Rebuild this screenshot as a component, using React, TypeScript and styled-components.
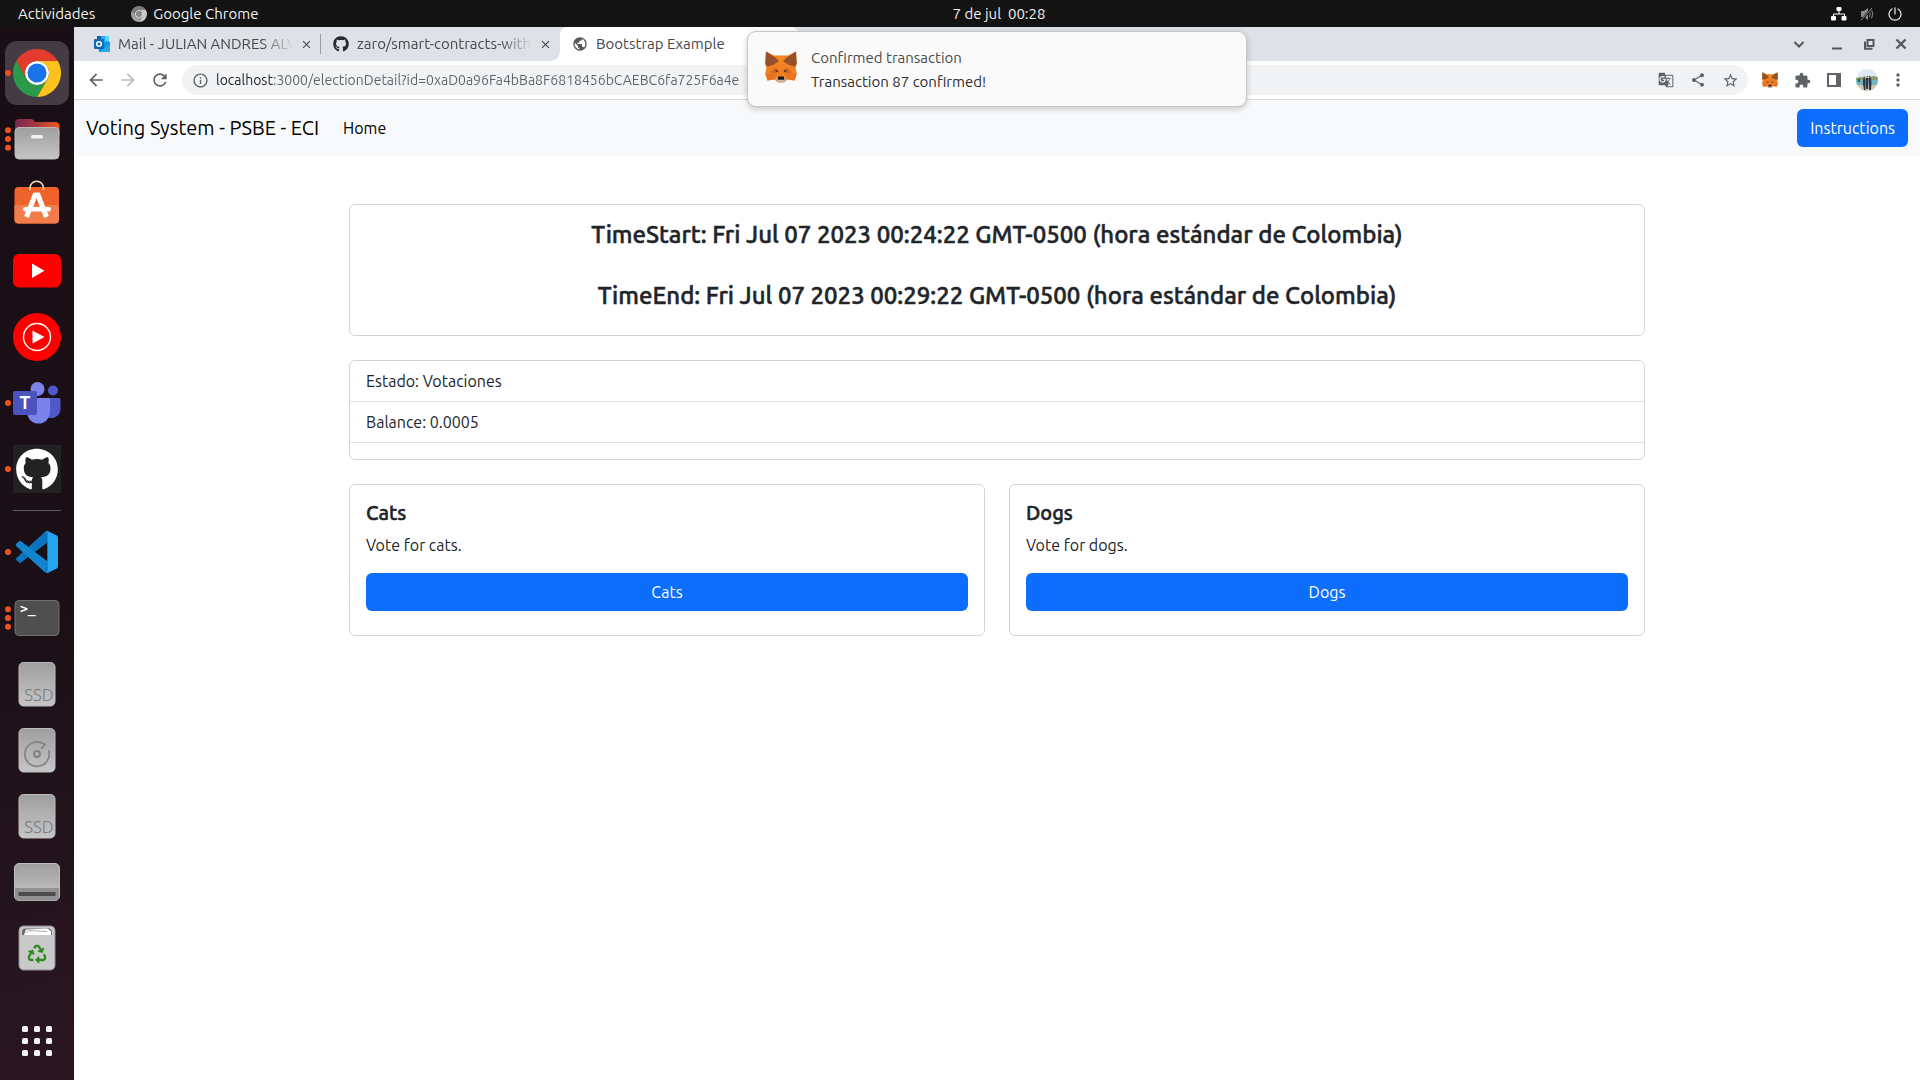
import React from "react";
import styled, { createGlobalStyle, css } from "styled-components";
import { FaGithub, FaRecycle } from "react-icons/fa";
import {
  MdArrowBack,
  MdArrowForward,
  MdClose,
  MdExtension,
  MdGTranslate,
  MdInfoOutline,
  MdMoreVert,
  MdPublic,
  MdRefresh,
  MdShare,
  MdStarBorder,
} from "react-icons/md";

const GlobalStyle = createGlobalStyle`
  *, *::before, *::after { box-sizing: border-box; }
  body { margin: 0; }
  body, button, input {
    font-family: Ubuntu, "Noto Sans", "Open Sans", sans-serif;
  }
  button { border: 0; background: none; padding: 0; margin: 0; color: inherit; cursor: pointer; }
  h1, h2, p, ul { margin: 0; padding: 0; }
  svg { display: block; flex: none; }
`;

/* ---------- desktop shell ---------- */

const Desktop = styled.div`
  min-height: 100vh;
  display: grid;
  grid-template: 27px 1fr / 74px 1fr;
  background: #fff;
`;

const TopBar = styled.header`
  grid-column: 1 / -1;
  display: grid;
  grid-template-columns: 1fr auto 1fr;
  align-items: center;
  padding: 0 18px;
  background: #131313;
  color: #f2f2f2;
  font-size: 15px;
  line-height: 26px;
`;

const TopGroup = styled.div<{ $end?: boolean; $gap: number }>`
  display: flex;
  align-items: center;
  justify-content: ${(p) => (p.$end ? "flex-end" : "flex-start")};
  gap: ${(p) => p.$gap}px;
`;

const TopButton = styled.button`
  display: flex;
  align-items: center;
  gap: 6px;
  font-size: 15px;
  line-height: 26px;
  white-space: pre;
`;

/* The clock is centred over the work area, to the right of the dock. */
const Clock = styled(TopButton)`
  padding-left: 78px;
`;

const Dock = styled.nav`
  display: flex;
  flex-direction: column;
  gap: 2px;
  padding: 14px 5px 7px;
  background: linear-gradient(165deg, #190e14 0%, #1b1017 55%, #2a1621 100%);
`;

const DockItem = styled.button<{ $active?: boolean; $last?: boolean }>`
  height: 64px;
  border-radius: 12px;
  ${(p) => p.$active && css`background: #453c43;`}
  ${(p) => p.$last && css`margin-top: auto;`}
`;

const DockRule = styled.hr`
  width: 48px;
  height: 1px;
  margin: 7px auto;
  border: 0;
  background: #5d555b;
`;

/* ---------- browser window ---------- */

const Browser = styled.div`
  position: relative;
  min-width: 0;
  display: flex;
  flex-direction: column;
`;

const TabStrip = styled.div`
  display: flex;
  align-items: center;
  height: 34px;
  padding-left: 8px;
  background: #dee1e6;
  color: #45494d;
`;

const Tab = styled.div<{ $active?: boolean; $divided?: boolean; $beforeActive?: boolean }>`
  width: 239px;
  height: 34px;
  display: flex;
  align-items: center;
  padding: 0 3px 0 12px;
  ${(p) =>
    p.$active &&
    css`
      background: #fff;
      border-radius: 8px 8px 0 0;
    `}
  ${(p) =>
    p.$beforeActive &&
    css`
      background: radial-gradient(circle at 0 0, transparent 7px, #fff 8px) right bottom / 8px 8px no-repeat;
    `}
  ${(p) =>
    p.$divided &&
    css`
      background: linear-gradient(#9a9da1, #9a9da1) right center / 1px 20px no-repeat;
    `}
`;

const TabLabel = styled.button<{ $fade?: boolean }>`
  flex: 1;
  min-width: 0;
  display: flex;
  align-items: center;
  gap: 8px;
  font-size: 15px;
  line-height: 20px;
  text-align: left;
  white-space: nowrap;
  overflow: hidden;
  ${(p) =>
    p.$fade &&
    css`
      mask-image: linear-gradient(90deg, #000 calc(100% - 32px), transparent);
    `}
`;

const CloseTab = styled.button`
  width: 24px;
  display: flex;
  justify-content: center;
`;

const WindowControls = styled.div`
  margin-left: auto;
  padding-right: 9px;
  display: flex;
  gap: 12px;
  button {
    width: 20px;
    height: 20px;
  }
  button:first-child {
    margin-right: 6px;
  }
`;

const Toolbar = styled.div`
  display: flex;
  align-items: center;
  height: 39px;
  padding: 0 12px;
  gap: 12px;
  background: #fff;
  border-bottom: 1px solid #d9dadc;
  color: #5f6368;
`;

const ToolButton = styled.button<{ $muted?: boolean }>`
  flex: none;
  width: 20px;
  height: 24px;
  display: grid;
  place-items: center;
  color: ${(p) => (p.$muted ? "#babcbe" : "#5f6368")};
`;

const Omnibox = styled.div`
  flex: 1;
  display: flex;
  align-items: center;
  gap: 12px;
  height: 30px;
  padding: 0 8px;
  border-radius: 15px;
  background: #f1f3f4;
`;

const Address = styled.input`
  flex: 1;
  min-width: 0;
  margin-left: -6px;
  padding: 0;
  border: 0;
  outline: 0;
  font-size: 14px;
  line-height: 20px;
  background: linear-gradient(90deg, #202124 58px, #5f6368 58px);
  background-clip: text;
  -webkit-text-fill-color: transparent;
`;

/* ---------- notification ---------- */

const Toast = styled.section`
  position: absolute;
  z-index: 2;
  top: 4px;
  left: 50%;
  transform: translateX(-50%);
  width: 500px;
  display: flex;
  gap: 14px;
  padding: 15px 18px 13px 17px;
  border: 1px solid #c6c6c6;
  border-radius: 9px;
  background: #fafafa;
  box-shadow: 0 2px 6px rgba(0, 0, 0, 0.2);
  color: #2e2e2e;
  font-size: 15px;
  line-height: 22px;
`;

const ToastIcon = styled.div`
  padding-top: 4px;
`;

const ToastText = styled.div`
  display: flex;
  flex-direction: column;
  gap: 2px;
`;

const ToastTitle = styled.p`
  color: #4a4a4a;
`;

/* ---------- web page ---------- */

const NavBar = styled.nav`
  display: flex;
  align-items: center;
  gap: 24px;
  min-height: 56px;
  padding: 8px 12px;
  background: #f8f9fa;
`;

const Brand = styled.a`
  color: #000;
  font-size: 20px;
  line-height: 30px;
  text-decoration: none;
`;

const NavLink = styled.a`
  color: #000;
  font-size: 16px;
  line-height: 24px;
  text-decoration: none;
`;

const PrimaryButton = styled.button<{ $block?: boolean }>`
  height: 38px;
  padding: 0 13px;
  border-radius: 6px;
  background: #0d6efd;
  color: #fff;
  font-size: 16px;
  line-height: 24px;
  ${(p) => (p.$block ? css`width: 100%; margin-bottom: 8px;` : css`margin-left: auto;`)}
`;

const Container = styled.main`
  width: 100%;
  max-width: 1320px;
  margin: 0 auto;
  padding: 48px 12px;
  display: flex;
  flex-direction: column;
  gap: 24px;
  color: #212529;
  font-size: 16px;
  line-height: 24px;
`;

const Card = styled.section`
  border: 1px solid #d3d3d4;
  border-radius: 6px;
  background: #fff;
`;

const CardBody = styled.div`
  padding: 16px;
`;

const Times = styled.div`
  display: flex;
  flex-direction: column;
  gap: 33px;
  padding: 16px 16px 25px;
  text-align: center;
`;

const TimeHeading = styled.h1`
  font-size: 24px;
  line-height: 28px;
  font-weight: 500;
  -webkit-text-stroke: 0.5px currentColor;
`;

const List = styled.ul`
  list-style: none;
  padding-bottom: 16px;
`;

const ListItem = styled.li`
  padding: 8px 16px;
  border-bottom: 1px solid #dee0e2;
`;

const Choices = styled.div`
  display: grid;
  grid-template-columns: 1fr 1fr;
  gap: 24px;
`;

const ChoiceTitle = styled.h2`
  margin-bottom: 8px;
  font-size: 20px;
  line-height: 24px;
  font-weight: 500;
  -webkit-text-stroke: 0.5px currentColor;
`;

const ChoiceText = styled.p`
  margin-bottom: 16px;
`;

/* ---------- drawings ---------- */

const ChromeLogo = ({ size, gray }: { size: number; gray?: boolean }) => {
  const c = gray
    ? ["#7d7d7d", "#c9c9c9", "#a0a0a0", "#8a8a8a"]
    : ["#e33b2e", "#fcc31e", "#2a9b48", "#1a73e8"];
  return (
    <svg width={size} height={size} viewBox="0 0 48 48">
      <circle cx="24" cy="24" r="12" fill="#fff" />
      <path d="M24 12H44.78a24 24 0 0 0-41.56 0L13.6 30A12 12 0 0 1 24 12Z" fill={c[0]} />
      <path d="M34.39 30 24 48A24 24 0 0 0 44.78 12H24A12 12 0 0 1 34.39 30Z" fill={c[1]} />
      <path d="M13.6 30 3.22 12A24 24 0 0 0 24 48L34.39 30A12 12 0 0 1 13.6 30Z" fill={c[2]} />
      <circle cx="24" cy="24" r="9.5" fill={c[3]} />
    </svg>
  );
};

const Fox = ({ size }: { size: number }) => (
  <svg width={size} height={size} viewBox="0 0 32 32">
    <path d="M1 .5 9 4.500h14L31 .5l.8 13-1.300 3 1.300 6-2.300 7-7-1-3.500 3h-6l-3.500-3-7 1L.2 22.500l1.300-6-1.300-3Z" fill="#f08020" />
    <path d="M12.500 5h7l-1 8h-5Z" fill="#f8881e" />
    <path d="M1 .5 9.500 6 14 10 8 14 2 15.500.3 12.500Z M31 .5 22.500 6 18 10 24 14 30 15.500 31.700 12.500Z" fill="#96512a" />
    <path d="M.2 23 10.500 22 10 28 2.500 29.500Z M31.800 23 21.500 22 22 28 29.500 29.500Z" fill="#e87424" />
    <path d="M10.500 22.500 5 21.500 9 17 13.500 18 13.500 22Z M21.500 22.500 27 21.500 23 17 18.500 18 18.500 22Z" fill="#d96c22" />
    <path d="M10.200 18.800 13 19.500 13.200 21 10.800 20.800Z M21.800 18.800 19 19.500 18.800 21 21.200 20.800Z" fill="#4a3a38" />
    <path d="M11 27.500 13 26h6l2 1.500-1.500 4h-7Z" fill="#c9b6a6" />
    <path d="M13.300 25.500h5.400l.8 2.500-.8.800h-5.400l-.8-.8Z" fill="#1b1a1a" />
  </svg>
);

const OutlookLogo = () => (
  <svg width="16" height="16" viewBox="0 0 16 16">
    <path d="M3 0h12v8H3Z" fill="#28a8ea" />
    <path d="M3 0h4v5H3Z" fill="#0364b8" />
    <path d="M11 0h4v5h-4Z" fill="#50d9ff" />
    <path d="M4 8 16 6v10H5Z" fill="#1490df" />
    <path d="M5 16 16 8v8Z" fill="#28a8ea" />
    <rect y="3" width="10" height="10" rx="1" fill="#0f6cbd" />
    <circle cx="5" cy="8" r="2.300" fill="none" stroke="#fff" strokeWidth="1.500" />
  </svg>
);

const Avatar = () => (
  <svg width="22" height="22" viewBox="0 0 22 22">
    <defs>
      <clipPath id="avatar-clip">
        <circle cx="11" cy="11" r="11" />
      </clipPath>
    </defs>
    <g clipPath="url(#avatar-clip)">
      <rect width="22" height="22" fill="#dfe9f1" />
      <path d="M0 9 5 8l6 1 6-2 5 1v4H0Z" fill="#85a06b" />
      <rect y="11" width="22" height="5" fill="#6fb7bd" />
      <rect y="16" width="22" height="6" fill="#d3c7b0" />
      <path d="M2 10h2v3H2Z" fill="#3f4a50" />
      <path d="M7 9.500h2.500V21H8l-1-6Z M10 9h2v11h-2Z M12.500 9h2.500l.5 5-.5 7h-2Z" fill="#34364a" />
      <path d="M7.500 7.500h1.500v1.500h-1.500Z M10.500 7h1.300v1.500h-1.300Z M13 7h1.500v1.500H13Z" fill="#5b4238" />
    </g>
  </svg>
);

const Dots = ({ count }: { count: number }) => (
  <g fill="#e95420">
    {Array.from({ length: count }, (_, i) => (
      <circle key={i} cx="3" cy={32 + (i - (count - 1) / 2) * 8.7} r="3" />
    ))}
  </g>
);

const DockArt = ({ dots = 0, children }: { dots?: number; children: React.ReactNode }) => (
  <svg width="64" height="64" viewBox="0 0 64 64">
    <defs>
      <linearGradient id="metal" x1="0" y1="0" x2="0" y2="1">
        <stop offset="0" stopColor="#9e9e9e" />
        <stop offset="1" stopColor="#c6c6c6" />
      </linearGradient>
      <linearGradient id="folder" x1="0" y1="0" x2="1" y2="0">
        <stop offset="0" stopColor="#77274f" />
        <stop offset="0.45" stopColor="#a5363f" />
        <stop offset="1" stopColor="#ed5b20" />
      </linearGradient>
    </defs>
    <Dots count={dots} />
    {children}
  </svg>
);

const FilesArt = () => (
  <DockArt dots={3}>
    <path d="M10 16a4 4 0 0 1 4-4h12q2 0 3 1.500l1 1.500h20a4 4 0 0 1 4.500 4v10h-44.500Z" fill="url(#folder)" />
    <rect x="10" y="20.500" width="44" height="31.500" rx="4" fill="url(#metal)" stroke="#b9b9b9" />
    <rect x="26" y="28" width="12" height="3.500" rx="1.500" fill="#f2f2f2" />
  </DockArt>
);

const SoftwareArt = () => (
  <DockArt>
    <rect x="9.500" y="14" width="44.500" height="36.500" rx="4" fill="#f0622b" />
    <path d="M9.500 32h44.500v14.500a4 4 0 0 1-4 4h-36.500a4 4 0 0 1-4-4Z" fill="#f37d4a" />
    <path d="M25 17v-2a6.700 6.700 0 0 1 13.500 0v2" fill="none" stroke="#f7dfb0" strokeWidth="1.600" />
    <path d="M21.500 44 30 22h3L41.500 44" fill="none" stroke="#fff" strokeWidth="5" />
    <rect x="18" y="34" width="28" height="4.500" rx="2.200" fill="#fff" />
  </DockArt>
);

const YouTubeArt = () => (
  <DockArt>
    <rect x="8" y="15" width="48" height="33.500" rx="6" fill="#f00" />
    <path d="M27 24.500v14.500L39.500 31.700Z" fill="#fff" />
  </DockArt>
);

const MusicArt = () => (
  <DockArt>
    <circle cx="32" cy="32" r="24" fill="#f00" />
    <circle cx="32" cy="32" r="13.500" fill="none" stroke="#fff" strokeWidth="1.400" />
    <path d="M27.500 25.500v13L39.500 32Z" fill="#fff" />
  </DockArt>
);

const TeamsArt = () => (
  <DockArt dots={1}>
    <circle cx="48" cy="19.500" r="5" fill="#5059c9" />
    <circle cx="32.500" cy="18" r="7" fill="#7b83eb" />
    <path d="M38 27h16a1.500 1.500 0 0 1 1.500 1.500V38a9 9 0 0 1-17.500 3Z" fill="#5059c9" />
    <path d="M22 27h21.500a1.500 1.500 0 0 1 1.500 1.500V41a11.500 11.500 0 0 1-23 0Z" fill="#7b83eb" />
    <rect x="8" y="20" width="24" height="24" rx="2" fill="#4b53bc" />
    <text x="20" y="38" textAnchor="middle" fontSize="18" fontWeight="700" fill="#fff" fontFamily="Ubuntu, Noto Sans, sans-serif">T</text>
  </DockArt>
);

const GitHubArt = () => (
  <DockArt dots={1}>
    <rect x="8" y="8" width="48" height="48" fill="#222" />
    <FaGithub x="10.500" y="11" size={43} color="#fff" />
  </DockArt>
);

const CodeArt = () => (
  <DockArt dots={1}>
    <g transform="translate(11 11) scale(1.75)">
      <path
        d="M23.15 2.587L18.21.21a1.494 1.494 0 0 0-1.705.29l-9.46 8.63-4.12-3.128a.999.999 0 0 0-1.276.057L.327 7.261A1 1 0 0 0 .326 8.74L3.899 12 .326 15.26a1 1 0 0 0 .001 1.479L1.65 17.94a.999.999 0 0 0 1.276.057l4.12-3.128 9.46 8.63a1.492 1.492 0 0 0 1.704.29l4.942-2.377A1.5 1.5 0 0 0 24 20.06V3.939a1.5 1.5 0 0 0-.85-1.352zm-5.146 14.861L10.826 12l7.178-5.448v10.896z"
        fill="#0b72bd"
      />
      <path
        d="M2.925 6.002a1 1 0 0 0-1.276.057L.327 7.261a1 1 0 0 0 0 1.479L16.505 23.500 18.004 17.448Z"
        fill="#1285cf"
      />
      <path
        d="M23.150 2.587 18.210.21a1.494 1.494 0 0 0-1.705.29c.6-.5 1.500-.1 1.500.8v21.400c0 .9-.9 1.300-1.500.8a1.492 1.492 0 0 0 1.704.29l4.942-2.377A1.500 1.500 0 0 0 24 20.060V3.939a1.500 1.500 0 0 0-.85-1.352Z"
        fill="#27a4ef"
      />
    </g>
  </DockArt>
);

const TerminalArt = () => (
  <DockArt dots={3}>
    <rect x="10" y="14.500" width="44" height="35" rx="4" fill="#4f4f4f" stroke="#6f6f6f" />
    <text x="15" y="27" fontSize="13" fontWeight="700" fill="#fff" fontFamily="DejaVu Sans Mono, monospace">&gt;_</text>
  </DockArt>
);

const DiskBody = () => (
  <rect x="14" y="10.500" width="36" height="43.500" rx="4.500" fill="url(#metal)" stroke="#bdbdbd" />
);

const SsdArt = () => (
  <DockArt>
    <DiskBody />
    <text x="34" y="49" textAnchor="middle" fontSize="17" fontWeight="300" fill="#7c7c7c" fontFamily="Ubuntu, Noto Sans, sans-serif">SSD</text>
  </DockArt>
);

const DiskArt = () => (
  <DockArt>
    <DiskBody />
    <g fill="none" stroke="#828282" strokeWidth="1.600">
      <path d="M43.500 32A12.200 12.200 0 1 1 37 25l3 1.500-4 4.500" />
      <circle cx="32" cy="36" r="3" strokeWidth="2" />
    </g>
  </DockArt>
);

const DriveArt = () => (
  <DockArt>
    <rect x="9.500" y="13.500" width="45" height="37" rx="4.500" fill="url(#metal)" stroke="#bdbdbd" />
    <path d="M10 38h44v8.500a4 4 0 0 1-4 4H14a4 4 0 0 1-4-4Z" fill="#919191" />
    <rect x="13.500" y="42" width="37" height="4" fill="#4c4c4c" />
  </DockArt>
);

const TrashArt = () => (
  <DockArt>
    <rect x="14" y="10" width="36" height="44" rx="4.500" fill="#c9c9c9" stroke="#8d8d8d" />
    <path d="M17 19v-3a3.500 3.500 0 0 1 3.500-3.500h23a3.500 3.500 0 0 1 3.500 3.500v3Z" fill="#6d6d6d" />
    <path d="M19 19 21 13.500 42 12.500 46 15v4Z" fill="#fff" />
    <path d="M21 17 24 14.500 42 15.500" fill="none" stroke="#b0b0b0" />
    <FaRecycle x="22.500" y="28.500" size={19} color="#2e8b1e" />
  </DockArt>
);

const AppsArt = () => (
  <DockArt>
    <g fill="#f4f4f4">
      {[17, 29, 41].map((y) =>
        [17, 29, 41].map((x) => <rect key={`${x}-${y}`} x={x} y={y} width="6" height="6" rx="1.500" />)
      )}
    </g>
  </DockArt>
);

const NetworkIcon = () => (
  <svg width="16" height="14" viewBox="0 0 16 14">
    <g fill="#fff">
      <rect x="5.500" width="5" height="4" rx="1" />
      <rect y="9" width="5" height="4.500" rx="1" />
      <rect x="10.500" y="9" width="5" height="4.500" rx="1" />
    </g>
    <path d="M8 4v3M2.500 10V7h11v3" fill="none" stroke="#fff" />
  </svg>
);

const MutedIcon = () => (
  <svg width="15" height="14" viewBox="0 0 15 14">
    <path d="M1 4h3l4-3v12L4 10H1Z" fill="#8a8a8a" />
    <path d="M9.500 4q1.500 3 0 6M11.500 2.500q2.500 4.500 0 9" fill="none" stroke="#8a8a8a" />
    <path d="M1.500 13.500 12 .5" stroke="#131313" strokeWidth="2" />
    <path d="M1 13 12 1" stroke="#8a8a8a" />
  </svg>
);

const PowerIcon = () => (
  <svg width="14" height="14" viewBox="0 0 14 14" fill="none" stroke="#eee" strokeWidth="1.200" strokeLinecap="round">
    <path d="M4 2a6 6 0 1 0 6 0M7 .8V7" />
  </svg>
);

const ControlIcon = ({ d, w = 2 }: { d: string; w?: number }) => (
  <svg width="20" height="20" viewBox="0 0 20 20" fill="none" stroke="#54585c" strokeWidth={w}>
    <path d={d} />
  </svg>
);

const PanelIcon = () => (
  <svg width="14" height="14" viewBox="0 0 14 14" fill="#5f6368">
    <path d="M0 0h14v14H0ZM2 2v10h7V2Z" fillRule="evenodd" />
  </svg>
);

/* ---------- data ---------- */

const apps: { name: string; art: React.ReactNode; active?: boolean }[] = [
  {
    name: "Google Chrome",
    active: true,
    art: (
      <DockArt dots={1}>
        <g transform="translate(8 8)">
          <ChromeLogo size={48} />
        </g>
      </DockArt>
    ),
  },
  { name: "Files", art: <FilesArt /> },
  { name: "Software", art: <SoftwareArt /> },
  { name: "YouTube", art: <YouTubeArt /> },
  { name: "YouTube Music", art: <MusicArt /> },
  { name: "Teams", art: <TeamsArt /> },
  { name: "GitHub", art: <GitHubArt /> },
];

const places = [
  { name: "Code", art: <CodeArt /> },
  { name: "Terminal", art: <TerminalArt /> },
  { name: "SSD 1", art: <SsdArt /> },
  { name: "Disk", art: <DiskArt /> },
  { name: "SSD 2", art: <SsdArt /> },
  { name: "Drive", art: <DriveArt /> },
  { name: "Trash", art: <TrashArt /> },
];

const choices = [
  { name: "Cats", text: "Vote for cats." },
  { name: "Dogs", text: "Vote for dogs." },
];

const times = [
  "TimeStart: Fri Jul 07 2023 00:24:22 GMT-0500 (hora estándar de Colombia)",
  "TimeEnd: Fri Jul 07 2023 00:29:22 GMT-0500 (hora estándar de Colombia)",
];

const url = "localhost:3000/electionDetail?id=0xaD0a96Fa4bBa8F6818456bCAEBC6fa725F6a4e";

export default function App() {
  return (
    <>
      <GlobalStyle />
      <Desktop>
        <TopBar>
          <TopGroup $gap={36}>
            <TopButton>Actividades</TopButton>
            <TopButton>
              <ChromeLogo size={16} gray />
              Google Chrome
            </TopButton>
          </TopGroup>
          <Clock>{"7 de jul  00:28"}</Clock>
          <TopGroup $end $gap={13}>
            <NetworkIcon />
            <MutedIcon />
            <PowerIcon />
          </TopGroup>
        </TopBar>

        <Dock>
          {apps.map((a) => (
            <DockItem key={a.name} aria-label={a.name} $active={a.active}>
              {a.art}
            </DockItem>
          ))}
          <DockRule />
          {places.map((a) => (
            <DockItem key={a.name} aria-label={a.name}>
              {a.art}
            </DockItem>
          ))}
          <DockItem aria-label="Apps" $last>
            <AppsArt />
          </DockItem>
        </Dock>

        <Browser>
          <TabStrip>
            <Tab $divided>
              <TabLabel $fade>
                <OutlookLogo />
                Mail - JULIAN ANDRES ALV
              </TabLabel>
              <CloseTab aria-label="Close tab"><MdClose size={13} /></CloseTab>
            </Tab>
            <Tab $beforeActive>
              <TabLabel $fade>
                <FaGithub size={16} color="#24292e" />
                zaro/smart-contracts-with
              </TabLabel>
              <CloseTab aria-label="Close tab"><MdClose size={13} /></CloseTab>
            </Tab>
            <Tab $active>
              <TabLabel>
                <MdPublic size={16} color="#54585c" />
                Bootstrap Example
              </TabLabel>
            </Tab>
            <WindowControls>
              <button aria-label="Search tabs"><ControlIcon d="M5.500 8 10 12.500 14.500 8" /></button>
              <button aria-label="Minimize"><ControlIcon d="M5 14.500h10" /></button>
              <button aria-label="Restore"><ControlIcon d="M8.500 6h6v6h-6ZM6 7.500v7.200h7.500" /></button>
              <button aria-label="Close"><ControlIcon d="M5.500 5.500 14.500 14.500M14.500 5.500 5.500 14.500" w={2.4} /></button>
            </WindowControls>
          </TabStrip>

          <Toolbar>
            <ToolButton aria-label="Back"><MdArrowBack size={20} /></ToolButton>
            <ToolButton aria-label="Forward" $muted><MdArrowForward size={20} /></ToolButton>
            <ToolButton aria-label="Reload"><MdRefresh size={20} /></ToolButton>
            <Omnibox>
              <ToolButton aria-label="Site information"><MdInfoOutline size={17} /></ToolButton>
              <Address aria-label="Address" defaultValue={url} spellCheck={false} />
              <ToolButton aria-label="Translate"><MdGTranslate size={16} /></ToolButton>
              <ToolButton aria-label="Share"><MdShare size={16} /></ToolButton>
              <ToolButton aria-label="Bookmark"><MdStarBorder size={17} /></ToolButton>
            </Omnibox>
            <ToolButton aria-label="MetaMask"><Fox size={16} /></ToolButton>
            <ToolButton aria-label="Extensions"><MdExtension size={17} /></ToolButton>
            <ToolButton aria-label="Side panel"><PanelIcon /></ToolButton>
            <ToolButton aria-label="Profile"><Avatar /></ToolButton>
            <ToolButton aria-label="Menu"><MdMoreVert size={20} /></ToolButton>
          </Toolbar>

          <NavBar>
            <Brand href="#home">Voting System - PSBE - ECI</Brand>
            <NavLink href="#home">Home</NavLink>
            <PrimaryButton>Instructions</PrimaryButton>
          </NavBar>

          <Container>
            <Card>
              <Times>
                {times.map((t) => (
                  <TimeHeading key={t}>{t}</TimeHeading>
                ))}
              </Times>
            </Card>
            <Card>
              <List>
                <ListItem>Estado: Votaciones</ListItem>
                <ListItem>Balance: 0.0005</ListItem>
              </List>
            </Card>
            <Choices>
              {choices.map((c) => (
                <Card key={c.name}>
                  <CardBody>
                    <ChoiceTitle>{c.name}</ChoiceTitle>
                    <ChoiceText>{c.text}</ChoiceText>
                    <PrimaryButton $block>{c.name}</PrimaryButton>
                  </CardBody>
                </Card>
              ))}
            </Choices>
          </Container>

          <Toast role="status">
            <ToastIcon>
              <Fox size={32} />
            </ToastIcon>
            <ToastText>
              <ToastTitle>Confirmed transaction</ToastTitle>
              <p>Transaction 87 confirmed!</p>
            </ToastText>
          </Toast>
        </Browser>
      </Desktop>
    </>
  );
}
